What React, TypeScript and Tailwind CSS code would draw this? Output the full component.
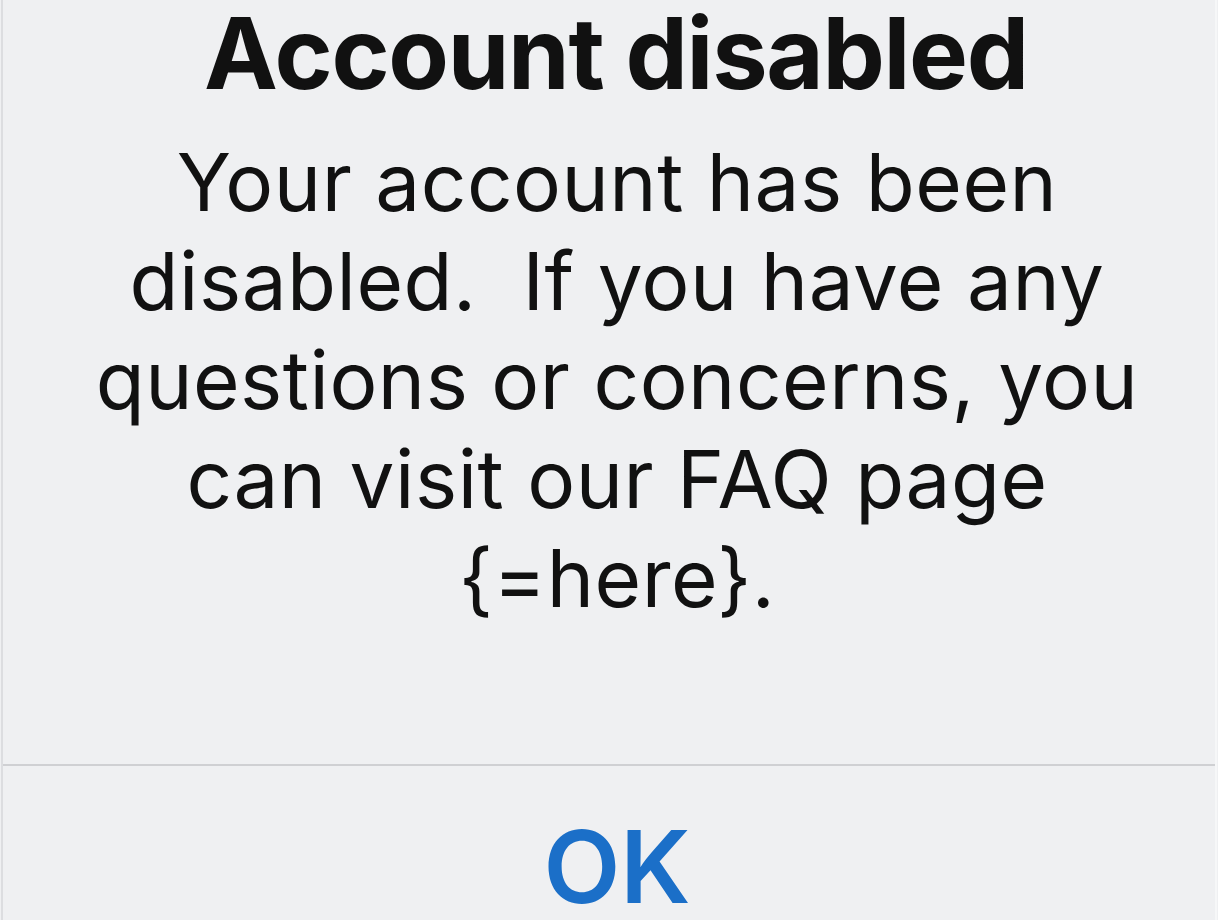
const AlertDialog = () => {
    return (
        <div className="h-[920px] w-full overflow-hidden bg-[#eff0f2] font-['Inter','Liberation_Sans',sans-serif] text-[#111111]">
            <div className="flex h-full flex-col border-l-2 border-r-2 border-l-[#dcdde0] border-r-[#f6f7f8] ml-[1px] mr-[1px]">
                <h1 className="pt-[4px] pl-[14px] text-center text-[99px] font-bold leading-none tracking-[-1.3px]">
                    Account disabled
                </h1>
                <p className="mt-[29px] pl-[16px] text-center text-[80px] font-normal leading-[99px] tracking-[0.5px]">
                    Your account has been
                    <br />
                    disabled.&nbsp; If you have any
                    <br />
                    questions or concerns, you
                    <br />
                    can visit our FAQ page
                    <br />
                    {'{=here}.'}
                </p>
                <div className="mt-[137px] h-[2px] w-full bg-[#cfd0d3]" />
                <button className="mt-[51px] pl-[16px] text-center text-[100px] font-semibold leading-none text-[#1b6fc8]">
                    OK
                </button>
            </div>
        </div>
    );
};

export default function App() {
    return <AlertDialog />;
}
